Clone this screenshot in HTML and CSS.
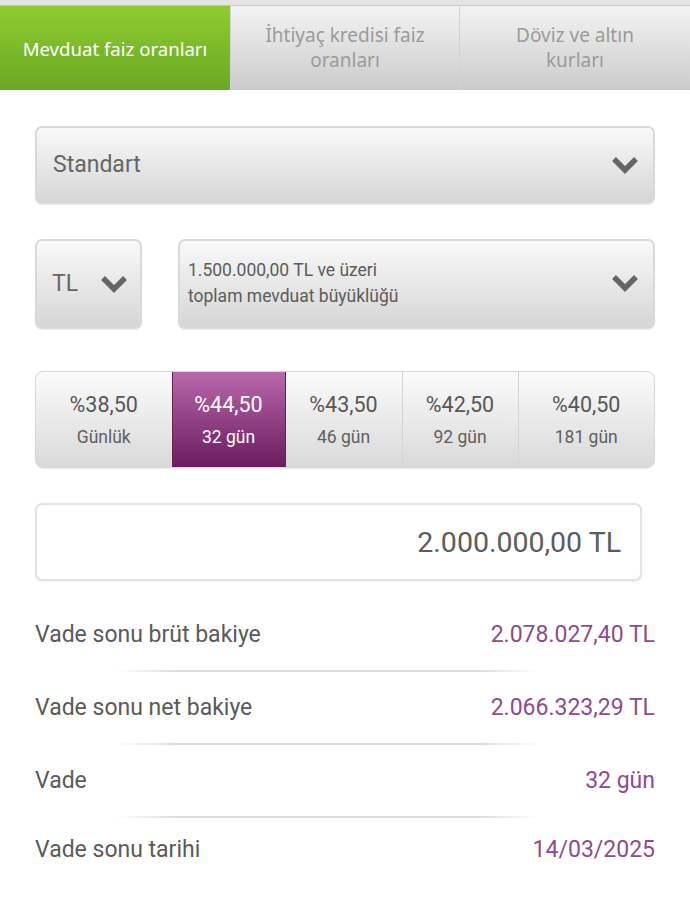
FILE: index.html
```html
<!DOCTYPE html>
<html lang="tr">
<head>
<meta charset="utf-8">
<link rel="stylesheet" href="styles.css">
</head>
<body>
<div class="page">
  <nav class="tabs">
    <div class="tab active">Mevduat faiz oranları</div>
    <div class="tab">İhtiyaç kredisi faiz<br>oranları</div>
    <div class="tab">Döviz ve altın<br>kurları</div>
  </nav>

  <main class="content">
    <div class="select select-main">
      <span class="select-text">Standart</span>
      <svg class="chev" width="28" height="18" viewBox="0 0 28 18"><polyline points="3,3 14,14 25,3" fill="none" stroke="#666" stroke-width="5.5" stroke-linejoin="miter"/></svg>
    </div>

    <div class="select-row">
      <div class="select select-cur">
        <span class="select-text">TL</span>
        <svg class="chev" width="28" height="18" viewBox="0 0 28 18"><polyline points="3,3 14,14 25,3" fill="none" stroke="#666" stroke-width="5.5"/></svg>
      </div>
      <div class="select select-tier">
        <span class="select-text small">1.500.000,00 TL ve üzeri<br>toplam mevduat büyüklüğü</span>
        <svg class="chev" width="28" height="18" viewBox="0 0 28 18"><polyline points="3,3 14,14 25,3" fill="none" stroke="#666" stroke-width="5.5"/></svg>
      </div>
    </div>

    <div class="rates">
      <div class="rate wide"><span class="pct">%38,50</span><span class="term">Günlük</span></div>
      <div class="rate sel"><span class="pct">%44,50</span><span class="term">32 gün</span></div>
      <div class="rate"><span class="pct">%43,50</span><span class="term">46 gün</span></div>
      <div class="rate"><span class="pct">%42,50</span><span class="term">92 gün</span></div>
      <div class="rate wide"><span class="pct">%40,50</span><span class="term">181 gün</span></div>
    </div>

    <div class="amount">2.000.000,00 TL</div>

    <div class="results">
      <div class="row"><span class="label">Vade sonu brüt bakiye</span><span class="value">2.078.027,40 TL</span></div>
      <div class="sep"></div>
      <div class="row"><span class="label">Vade sonu net bakiye</span><span class="value">2.066.323,29 TL</span></div>
      <div class="sep"></div>
      <div class="row"><span class="label">Vade</span><span class="value">32 gün</span></div>
      <div class="sep"></div>
      <div class="row"><span class="label">Vade sonu tarihi</span><span class="value">14/03/2025</span></div>
    </div>
  </main>
</div>
</body>
</html>
```

FILE: styles.css
```css
* { box-sizing: border-box; }
html, body { margin: 0; padding: 0; background: #fff; }
body { font-family: Roboto, "Noto Sans", Arial, sans-serif; color: #555; }

.page { width: 690px; }

.tabs {
  display: flex;
  height: 90px;
  border-top: 5px solid #e4e4e4;
  background: #e4e4e4;
}
.tab {
  flex: 1;
  display: flex;
  align-items: center;
  justify-content: center;
  text-align: center;
  font-family: "Noto Sans", sans-serif;
  font-size: 19px;
  line-height: 25px;
  color: #9b9b9b;
  background: linear-gradient(#f3f3f3, #cbcbcb);
  border-left: 1px solid #d2d2d2;
  border-top: 1px solid #c9c9c9;
}
.tab:first-child { border-left: none; }
.tab.active {
  flex: 0 0 230px;
  color: #fff;
  font-size: 18.6px;
  border-top: 1px solid #b6d98a;
  background: linear-gradient(#8fcb2e, #6aa925);
}
.tab:nth-child(2) { flex: 0 0 229px; }

.content { padding: 36px 35px 0 35px; }

.select {
  display: flex;
  align-items: center;
  justify-content: space-between;
  border: 2px solid #d9d9d9;
  border-radius: 7px;
  background: linear-gradient(#f9f9f9, #d6d6d6);
  box-shadow: 0 1px 1px rgba(0,0,0,0.08);
}
.select-text { font-size: 23px; color: #666; line-height: 26px; }
.select-text.small { font-size: 17.5px; line-height: 26px; color: #5c5c5c; }

.select-main { height: 78px; padding: 0 14px 0 16px; }

.select-row {
  display: flex;
  gap: 36px;
  margin-top: 35px;
}
.select-cur { width: 107px; height: 90px; padding: 0 12px 0 15px; }
.select-tier { flex: 1; height: 90px; padding: 0 14px 2px 8px; }

.rates {
  display: flex;
  margin-top: 42px;
  height: 97px;
  border: 1px solid #d8d8d8;
  border-radius: 8px;
  overflow: hidden;
  background: linear-gradient(#fbfbfb, #d9d9d9);
  box-shadow: 0 1px 1px rgba(0,0,0,0.08);
}
.rate {
  flex: 0 0 116px;
  display: flex;
  flex-direction: column;
  align-items: center;
  justify-content: center;
  gap: 9px;
  padding-top: 2px;
  border-left: 1px solid #d4d4d4;
}
.rate:first-child { border-left: none; }
.rate.wide { flex: 1; }
.rate.sel {
  flex: 0 0 114px;
  background: linear-gradient(#b868ab, #6a1c60);
  border-left: 1px solid #6a1c60;
  border-right: 1px solid #6a1c60;
  color: #fff;
}
.rate.sel + .rate { border-left: none; }
.pct { font-size: 21.5px; line-height: 24px; color: #575757; }
.term { font-size: 17.5px; line-height: 22px; color: #5f5f5f; }
.rate.sel .pct, .rate.sel .term { color: #fff; }

.amount {
  margin-top: 35px;
  width: 607px;
  height: 78px;
  border: 2px solid #e2e2e2;
  border-radius: 7px;
  background: #fff;
  box-shadow: 0 1px 2px rgba(0,0,0,0.06);
  display: flex;
  align-items: center;
  justify-content: flex-end;
  padding-right: 19px;
  font-size: 28.5px;
  color: #5c5c5c;
}

.results { margin-top: 35px; }
.row {
  display: flex;
  justify-content: space-between;
  align-items: center;
  height: 37px;
}
.label { font-size: 23px; color: #5a5a5a; }
.value { font-size: 23px; color: #8f4b8c; }
.sep {
  height: 2px;
  margin: 17px 115px 17px 80px;
  background: linear-gradient(90deg, rgba(220,220,220,0), #dcdcdc 15%, #dcdcdc 85%, rgba(220,220,220,0));
}
.sep:nth-child(6) { margin-bottom: 13px; }
```
